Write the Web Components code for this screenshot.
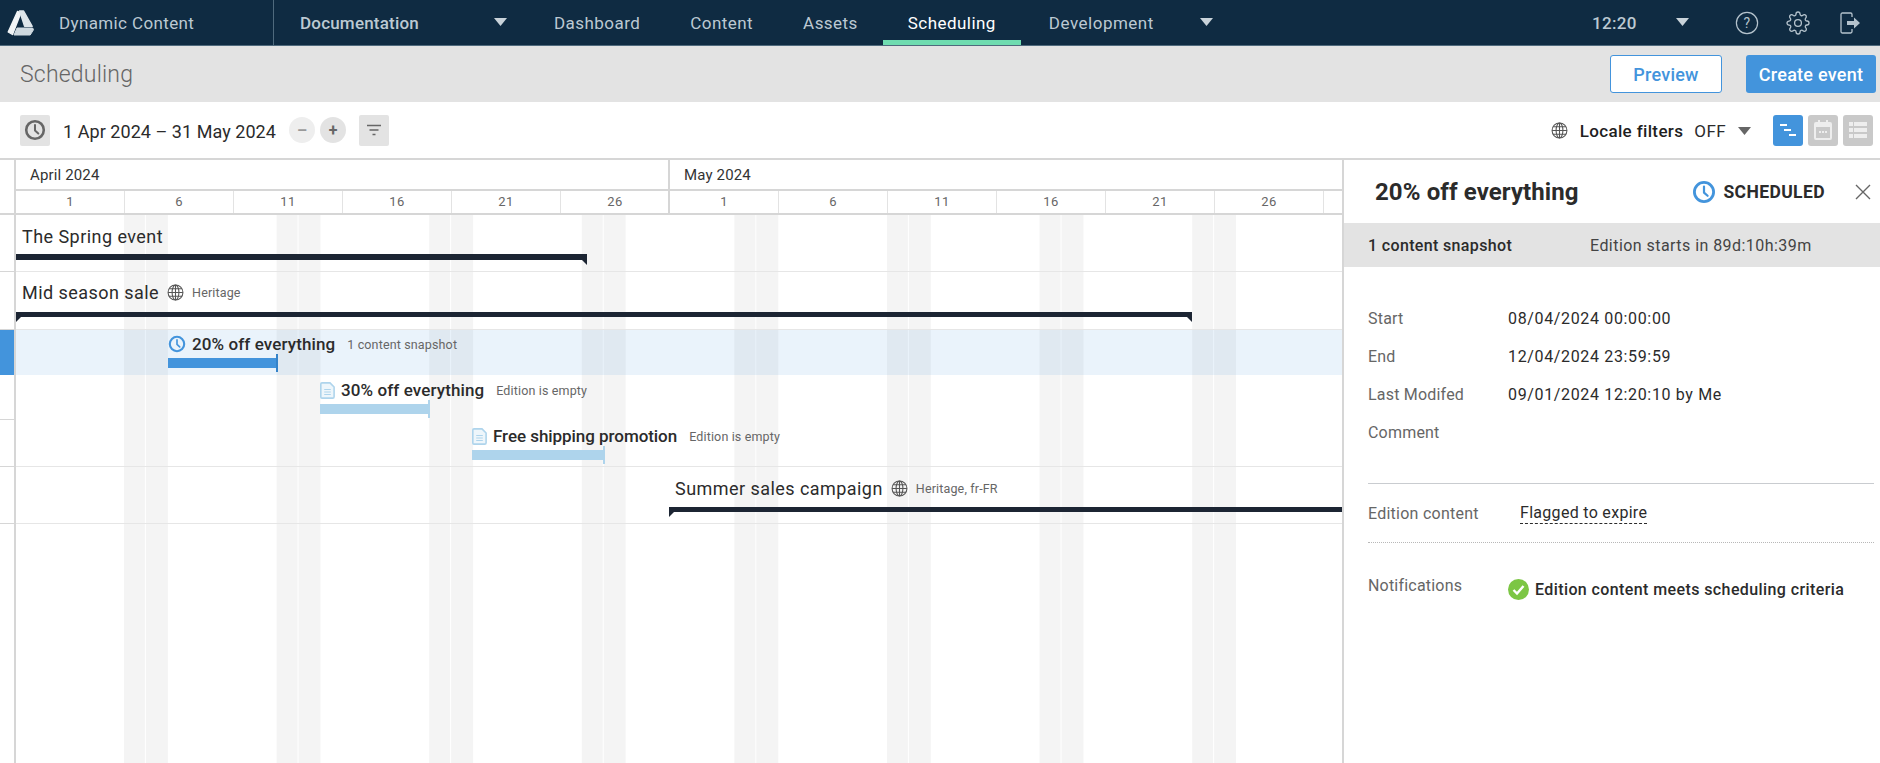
<!DOCTYPE html>
<html lang="en">
<head>
<meta charset="utf-8">
<title>Scheduling</title>
<style>
	html, body { margin: 0; height: 100%; overflow: hidden; }
	body { font-family: Roboto, "Liberation Sans", sans-serif; color: #2b2b2b; background: #fff; }
	app-shell svg { display: block; }
</style>
</head>
<body>

<app-shell>
	<top-nav></top-nav>
	<page-header></page-header>
	<date-toolbar></date-toolbar>
	<div slot="gantt">
		<gantt-chart>
			<gantt-row ruled style="--h:57px; --label-top:9px; --bar-top:8px; --start:0px; --len:571px; --bar-h:6px" kind="parent" notch="right" title-text="The Spring event"></gantt-row>
			<gantt-row ruled style="--h:58px; --label-top:8px; --bar-top:10px; --start:0px; --len:1176px; --bar-h:5px" kind="parent" notch="both" title-text="Mid season sale" globe meta="Heritage"></gantt-row>
			<gantt-row selected style="--h:45px; --label-top:4px; --bar-top:4px; --start:152px; --len:109px; --bar-h:10px" kind="edition" state="scheduled" title-text="20% off everything" meta="1 content snapshot"></gantt-row>
			<gantt-row rail-rule style="--h:45px; --label-top:5px; --bar-top:4px; --start:304px; --len:109px; --bar-h:10px" kind="edition" state="empty" title-text="30% off everything" meta="Edition is empty"></gantt-row>
			<gantt-row ruled style="--h:47px; --label-top:6px; --bar-top:4px; --start:456px; --len:132px; --bar-h:10px; --ls:-.05px" kind="edition" state="empty" title-text="Free shipping promotion" meta="Edition is empty"></gantt-row>
			<gantt-row ruled style="--h:57px; --label-top:9px; --bar-top:9px; --start:653px; --len:673px; --bar-h:5px" kind="parent" notch="left" title-text="Summer sales campaign" globe meta="Heritage, fr-FR"></gantt-row>
		</gantt-chart>
	</div>
	<div slot="panel">
		<detail-panel></detail-panel>
	</div>
</app-shell>

<script>
const ICONS = {
	clock: '<svg viewBox="0 0 24 24" width="100%" height="100%" fill="none" stroke="currentColor"><circle cx="12" cy="12" r="9.6" stroke-width="2.8"/><path d="M12 6.5V12.6l3.6 3.2" stroke-width="2.2" stroke-linecap="round" stroke-linejoin="round"/></svg>',
	globe: '<svg viewBox="0 0 16 16" width="100%" height="100%" fill="none" stroke="currentColor" stroke-width="1"><circle cx="8" cy="8" r="7"/><ellipse cx="8" cy="8" rx="3.2" ry="7"/><path d="M8 1v14M1 8h14M2 4.4h12M2 11.6h12"/></svg>',
	caret: '<svg viewBox="0 0 13 8" width="13" height="8" fill="currentColor"><path d="M0 0h13L6.5 8z"/></svg>',
	doc: '<svg viewBox="0 0 15 17" width="15" height="17" fill="#eef6fb" stroke="#aed4ec" stroke-width="1.6"><path d="M2 .9h8l4.1 4.1v9.7a1.4 1.4 0 0 1-1.4 1.4H2a1.2 1.2 0 0 1-1.2-1.2V2.1A1.2 1.2 0 0 1 2 .9z"/><path d="M4.2 7.5h6.6M4.2 10h6.6M4.2 12.5h6.6" stroke-width="1.1"/></svg>'
};

class AppShell extends HTMLElement {
	constructor() {
		super();
		const shadow = this.attachShadow({mode: 'open'});
		shadow.innerHTML = `<style>
			:host { display: flex; flex-direction: column; height: 763px; overflow: hidden; }
			#main { flex: 1; display: flex; min-height: 0; border-top: 2px solid #d6d6d6; }
			#left { width: 1342px; flex: none; }
			#right { flex: 1; min-width: 0; }
			::slotted([slot]) { height: 100%; }
		</style>
		<slot></slot>
		<div id="main">
			<div id="left"><slot name="gantt"></slot></div>
			<div id="right"><slot name="panel"></slot></div>
		</div>`;
	}
}

class TopNav extends HTMLElement {
	constructor() {
		super();
		const shadow = this.attachShadow({mode: 'open'});
		shadow.innerHTML = `<style>
			:host { display: flex; height: 45px; background: #0f2b42; border-bottom: 1px solid #4f6a7d; color: #bcc9d2; font-size: 17px; letter-spacing: .45px; box-sizing: content-box; }
			a { display: flex; align-items: center; white-space: nowrap; }
			#brand { width: 274px; flex: none; display: flex; align-items: center; border-right: 1px solid #4f6a7d; box-sizing: border-box; letter-spacing: .37px; }
			#brand svg { margin-left: 7px; flex: none; }
			#brand span { margin-left: 25px; }
			#hub { width: 246px; padding-left: 26px; box-sizing: border-box; display: flex; align-items: center; font-weight: 500; flex: none; letter-spacing: .2px; }
			#hub svg, #dev svg, #time svg { color: #c9d3da; margin-top: -1px; }
			#hub span { width: 194px; }
			#tabs { display: flex; height: 45px; margin-left: 9px; }
			.tab { padding: 0 25px; position: relative; }
			.tab.on { color: #fff; }
			.tab.on::after { content: ""; position: absolute; left: 0; right: 0; bottom: 0; height: 5px; background: #6fdcb0; }
			#dev { padding-left: 28px; letter-spacing: .5px; }
			#dev svg { margin-left: 46px; }
			#right { margin-left: auto; display: flex; align-items: center; color: #bcc9d2; }
			#time { width: 110px; display: flex; align-items: center; font-weight: 500; letter-spacing: .3px; }
			#time span { width: 84px; }
			.ico { width: 24px; height: 24px; margin-left: 27px; color: #b5c3cd; }
		</style>
		<div id="brand">
			<svg width="27" height="26" viewBox="0 0 27 26" fill="#e8edf1" stroke-linejoin="round">
				<path d="M10.5 1.5 13.8 3 5.5 24.5 1.2 22z" fill="#f2f5f7" stroke="#f2f5f7" stroke-width="1.4"/>
				<path d="M12.6 1h4l8.6 15.4h-7.6z" fill="#dfe6eb" stroke="#dfe6eb" stroke-width="1.4"/>
				<path d="M10 18h15.6l1 1.6-3.4 5.4H7z" fill="#cfd9e0" stroke="#cfd9e0" stroke-width="1"/>
			</svg>
			<span>Dynamic Content</span>
		</div>
		<div id="hub"><span>Documentation</span>${ICONS.caret}</div>
		<div id="tabs">
			<a class="tab">Dashboard</a>
			<a class="tab">Content</a>
			<a class="tab">Assets</a>
			<a class="tab on">Scheduling</a>
			<a class="tab" id="dev">Development${ICONS.caret}</a>
		</div>
		<div id="right">
			<div id="time"><span>12:20</span>${ICONS.caret}</div>
			<div class="ico" style="margin-left:33px"><svg viewBox="0 0 24 24" width="24" height="24" fill="none" stroke="currentColor" stroke-width="1.2"><circle cx="12" cy="12" r="10.6"/><text x="12" y="17" text-anchor="middle" font-size="14" font-family="Roboto, sans-serif" fill="currentColor" stroke="none">?</text></svg></div>
			<div class="ico"><svg viewBox="0 0 24 24" width="24" height="24" fill="none" stroke="currentColor" stroke-width="1.3"><circle cx="12" cy="12" r="3.4"/><path d="M19.4 15a1.65 1.65 0 0 0 .33 1.82l.06.06a2 2 0 0 1 0 2.83 2 2 0 0 1-2.83 0l-.06-.06a1.65 1.65 0 0 0-1.82-.33 1.65 1.65 0 0 0-1 1.51V21a2 2 0 0 1-2 2 2 2 0 0 1-2-2v-.09A1.65 1.65 0 0 0 9 19.4a1.65 1.65 0 0 0-1.82.33l-.06.06a2 2 0 0 1-2.83 0 2 2 0 0 1 0-2.83l.06-.06a1.65 1.65 0 0 0 .33-1.82 1.65 1.65 0 0 0-1.51-1H3a2 2 0 0 1-2-2 2 2 0 0 1 2-2h.09A1.65 1.65 0 0 0 4.6 9a1.65 1.65 0 0 0-.33-1.82l-.06-.06a2 2 0 0 1 0-2.83 2 2 0 0 1 2.83 0l.06.06a1.65 1.65 0 0 0 1.82.33H9a1.65 1.65 0 0 0 1-1.51V3a2 2 0 0 1 2-2 2 2 0 0 1 2 2v.09a1.65 1.65 0 0 0 1 1.51 1.65 1.65 0 0 0 1.82-.33l.06-.06a2 2 0 0 1 2.83 0 2 2 0 0 1 0 2.83l-.06.06a1.65 1.65 0 0 0-.33 1.82V9a1.65 1.65 0 0 0 1.51 1H21a2 2 0 0 1 2 2 2 2 0 0 1-2 2h-.09a1.65 1.65 0 0 0-1.51 1z"/></svg></div>
			<div class="ico" style="margin:0 18px 0 28px"><svg viewBox="0 0 24 24" width="24" height="24" fill="none" stroke="currentColor" stroke-width="1.3"><path d="M14 6V3.4A1.4 1.4 0 0 0 12.6 2H4.4A1.4 1.4 0 0 0 3 3.4v17.2A1.4 1.4 0 0 0 4.4 22h8.2a1.4 1.4 0 0 0 1.4-1.4V18"/><path d="M9 10h7V6.5l6 5.5-6 5.5V14H9z" fill="currentColor" stroke="none"/></svg></div>
		</div>`;
	}
}

class PageHeader extends HTMLElement {
	constructor() {
		super();
		const shadow = this.attachShadow({mode: 'open'});
		shadow.innerHTML = `<style>
			:host { display: flex; align-items: center; height: 56px; background: #e3e3e3; padding: 0 4px 0 20px; }
			h1 { margin: 1px 0 0; font-size: 23px; font-weight: 300; color: #666; letter-spacing: .2px; }
			#actions { margin-left: auto; display: flex; gap: 24px; }
			button { height: 38px; border-radius: 3px; font: 500 18px Roboto, sans-serif; letter-spacing: .25px; box-sizing: border-box; padding: 0; }
			#preview { width: 112px; background: #fff; border: 1px solid #4394dc; color: #4394dc; }
			#create { width: 130px; background: #4394dc; border: none; color: #fff; }
		</style>
		<h1>Scheduling</h1>
		<div id="actions">
			<button id="preview">Preview</button>
			<button id="create">Create event</button>
		</div>`;
	}
}

class DateToolbar extends HTMLElement {
	constructor() {
		super();
		const shadow = this.attachShadow({mode: 'open'});
		shadow.innerHTML = `<style>
			:host { display: flex; align-items: center; height: 56px; padding: 0 7px 0 20px; box-sizing: border-box; color: #2b2b2b; }
			.sq { width: 30px; height: 31px; border-radius: 2px; background: #e3e3e3; display: flex; align-items: center; justify-content: center; color: #666; flex: none; }
			#range { margin: 2px 0 0 13px; font-size: 18px; width: 212px; white-space: nowrap; letter-spacing: .05px; }
			.zoom { width: 26px; height: 26px; border-radius: 50%; display: flex; align-items: center; justify-content: center; background: #e3e3e3; color: #666; font-size: 16px; font-weight: 700; flex: none; }
			#minus { margin-left: 14px; background: #eee; color: #999; }
			#plus { margin-left: 5px; }
			#filter { margin-left: 13px; }
			#right { margin-left: auto; display: flex; align-items: center; }
			#globe { width: 17px; height: 17px; color: #555; }
			#lf { margin: 2px 0 0 12px; font-weight: 500; font-size: 17px; letter-spacing: .35px; color: #1f1f1f; }
			#off { margin: 2px 0 0 11px; font-size: 17px; letter-spacing: .4px; }
			#car { margin-left: 12px; color: #666; margin-top: -1px; }
			#views { display: flex; gap: 5px; margin-left: 22px; }
			#views .sq { border-radius: 3px; background: #c9c9c9; color: #eee; }
			#views .sq.on { background: #4394dc; color: #fff; }
		</style>
		<div class="sq"><div style="width:22px;height:22px">${ICONS.clock}</div></div>
		<div id="range">1 Apr 2024 – 31 May 2024</div>
		<div class="zoom" id="minus">–</div>
		<div class="zoom" id="plus">+</div>
		<div class="sq" id="filter"><svg width="16" height="12" viewBox="0 0 16 12" stroke="currentColor" stroke-width="1.4"><path d="M1 1.5h14M3.5 6h9M6.5 10.5h3"/></svg></div>
		<div id="right">
			<div id="globe">${ICONS.globe}</div>
			<div id="lf">Locale filters</div>
			<div id="off">OFF</div>
			<div id="car">${ICONS.caret}</div>
			<div id="views">
				<div class="sq on"><svg width="18" height="14" viewBox="0 0 18 14" fill="currentColor"><path d="M1 1h7v2H1zM5 6h7v2H5zM10 11h7v2h-7z"/></svg></div>
				<div class="sq"><svg width="18" height="20" viewBox="0 0 18 20" fill="currentColor"><path d="M4 0h2v3H4zM12 0h2v3h-2z"/><path fill-rule="evenodd" d="M2 2h14a2 2 0 0 1 2 2v14a2 2 0 0 1-2 2H2a2 2 0 0 1-2-2V4a2 2 0 0 1 2-2zm0 5v11h14V7z"/><path d="M5 11h2v2H5zM8 11h2v2H8zM11 11h2v2h-2z"/></svg></div>
				<div class="sq"><svg width="18" height="16" viewBox="0 0 18 16" fill="currentColor"><path d="M0 0h4v4H0zM5 0h13v4H5zM0 6h4v4H0zM5 6h13v4H5zM0 12h4v4H0zM5 12h13v4H5z"/></svg></div>
			</div>
		</div>`;
	}
}

class GanttChart extends HTMLElement {
	constructor() {
		super();
		const shadow = this.attachShadow({mode: 'open'});
		const days = [1, 6, 11, 16, 21, 26];
		const cells = function() {
			return days.map(function(d) { return `<div class="day">${d}</div>`; }).join('');
		};
		shadow.innerHTML = `<style>
			:host { display: flex; flex-direction: column; height: 100%; overflow: hidden; }
			#head { display: grid; grid-template-columns: 14px 656px 1fr; flex: none; }
			.railhead { grid-row: span 2; border-right: 2px solid #d6d6d6; width: 14px; box-sizing: content-box; border-bottom: 2px solid #d6d6d6; }
			.month { height: 29px; padding: 0 0 0 14px; display: flex; align-items: center; font-size: 15px; color: #333; letter-spacing: .15px; border-bottom: 2px solid #d6d6d6; border-right: 2px solid #d6d6d6; box-sizing: content-box; margin-left: 2px; }
			.month + .month { border-right: none; margin-left: 0; padding-left: 14px; }
			.days { display: flex; grid-column: 2; border-bottom: 2px solid #d6d6d6; margin-left: 2px; border-right: 2px solid #d6d6d6; height: 22px; overflow: hidden; }
			.days + .days { grid-column: 3; margin-left: 0; border-right: none; }
			.day { width: 109px; flex: none; box-sizing: border-box; border-right: 1px solid #e3e3e3; text-align: center; font-size: 13px; line-height: 22px; color: #666; letter-spacing: .4px; }
			#body { flex: 1; min-height: 0; display: flex; flex-direction: column; background-color: #fff; background-image: linear-gradient(90deg, #f4f4f4 0 21px, #fff 21px 22px, #f4f4f4 22px 44px, #fff 44px); background-size: 152.6px 100%; background-position: 124px 0; background-repeat: repeat-x; }
			#fill { flex: 1; display: grid; grid-template-columns: 14px 2px 1fr; }
			#fill i { background: #d6d6d6; grid-column: 2; }
			#fill b { background: #fff; grid-column: 1; grid-row: 1; }
		</style>
		<div id="head">
			<div class="railhead"></div>
			<div class="month">April 2024</div>
			<div class="month">May 2024</div>
			<div class="days">${cells()}</div>
			<div class="days">${cells()}</div>
		</div>
		<div id="body">
			<slot></slot>
			<div id="fill"><b></b><i></i></div>
		</div>`;
	}
}

class GanttRow extends HTMLElement {
	connectedCallback() {
		if(this.shadowRoot)
			return;

		const shadow = this.attachShadow({mode: 'open'});
		const kind = this.getAttribute('kind');
		const state = this.getAttribute('state');
		const notch = this.getAttribute('notch');
		const meta = this.getAttribute('meta');
		let icon = '';

		if(state === 'scheduled')
			icon = `<span class="state clock">${ICONS.clock}</span>`;
		else if(state === 'empty')
			icon = `<span class="state">${ICONS.doc}</span>`;

		shadow.innerHTML = `<style>
			:host { display: grid; grid-template-columns: 14px 2px 1fr; height: var(--h); box-sizing: content-box; }
			#rail { background: #fff; }
			:host([ruled]) #rail, :host([rail-rule]) #rail { border-bottom: 1px solid #d6d6d6; }
			:host([selected]) #rail { background: #4394dc; }
			#line { background: #d6d6d6; }
			#track { display: flow-root; padding-left: var(--start); box-sizing: border-box; min-width: 0; }
			:host([ruled]) #track { border-bottom: 1px solid #e6e6e6; }
			:host([selected]) #track { background: rgba(67, 148, 220, .11); }
			#label { display: flex; align-items: center; white-space: nowrap; margin-top: var(--label-top); height: 20px; }
			.parent #label { padding-left: 6px; font-size: 18px; color: #2b2b2b; letter-spacing: .45px; margin-top: calc(var(--label-top) + 2px); }
			.edition #label { font-size: 17px; font-weight: 500; letter-spacing: var(--ls, .1px); color: #2b2b2b; }
			.state { display: block; width: 18px; height: 18px; margin-right: 6px; flex: none; color: #4394dc; }
			.state svg { display: block; }
			.state:not(.clock) { width: 15px; height: 17px; }
			#globe { width: 17px; height: 17px; margin: 0 8px; color: #555; flex: none; }
			#meta { font-size: 12.5px; font-weight: 400; color: #666; letter-spacing: .15px; margin-left: 12px; }
			.parent #globe + #meta { margin-left: 0; }
			#bar { position: relative; width: var(--len); height: var(--bar-h); margin-top: var(--bar-top); }
			.parent #bar { background: #1c2533; }
			.scheduled #bar { background: #4394dc; }
			.empty #bar { background: #aed4ec; }
			.edition #bar::after { content: ""; position: absolute; right: -1px; top: -4px; bottom: -4px; width: 2px; background: inherit; }
			.scheduled #bar::after { background: #3583c9; }
			.tip { position: absolute; top: 100%; width: 0; height: 0; border-style: solid; }
			.tip.l { left: 0; border-width: 5px 5px 0 0; border-color: #1c2533 transparent transparent transparent; }
			.tip.r { right: 0; border-width: 5px 0 0 5px; border-color: #1c2533 transparent transparent transparent; }
		</style>
		<div id="rail"></div>
		<div id="line"></div>
		<div id="track" class="${kind} ${state || ''}">
			<div id="label">${icon}<span>${this.getAttribute('title-text')}</span>${this.hasAttribute('globe') ? `<span id="globe">${ICONS.globe}</span>` : ''}${meta ? `<span id="meta">${meta}</span>` : ''}</div>
			<div id="bar">${notch === 'left' || notch === 'both' ? '<i class="tip l"></i>' : ''}${notch === 'right' || notch === 'both' ? '<i class="tip r"></i>' : ''}</div>
		</div>`;
	}
}

class DetailPanel extends HTMLElement {
	constructor() {
		super();
		const shadow = this.attachShadow({mode: 'open'});
		shadow.innerHTML = `<style>
			:host { display: block; height: 100%; border-left: 2px solid #d6d6d6; box-sizing: border-box; font-size: 16px; color: #2b2b2b; letter-spacing: .2px; }
			#head { display: flex; align-items: center; height: 63px; padding-left: 31px; }
			h2 { margin: 0; font-size: 24px; font-weight: 700; color: #2b2b2b; letter-spacing: .1px; flex: 1; white-space: nowrap; }
			#status { display: flex; align-items: center; font-weight: 700; font-size: 17.5px; letter-spacing: .4px; }
			#status i { display: block; width: 24px; height: 24px; margin-right: 7px; color: #4394dc; }
			#close { margin: 0 9px 0 30px; width: 16px; height: 16px; color: #666; }
			#strip { height: 44px; background: #e3e3e3; display: flex; align-items: center; padding-left: 24px; }
			#strip b { width: 222px; font-weight: 500; letter-spacing: .35px; }
			#strip span { color: #444; letter-spacing: .45px; }
			#info { padding: 32px 0 0 24px; display: grid; grid-template-columns: 140px 1fr; grid-auto-rows: 38px; align-items: center; }
			.k { color: #666; }
			.v { letter-spacing: .65px; }
			.rule { margin: 32px 6px 0 24px; border-top: 1px solid #c9ccd0; }
			#content { margin: 0 6px 0 24px; height: 58px; display: flex; align-items: center; border-bottom: 1px dotted #b8b8b8; }
			#content .k { width: 152px; letter-spacing: .25px; }
			#content u { text-decoration: none; border-bottom: 1px dashed #2b2b2b; padding-bottom: 1px; letter-spacing: .3px; }
			#notes { margin: 33px 0 0 24px; display: flex; }
			#notes .k { width: 140px; }
			#notes div + div { display: flex; align-items: center; font-weight: 500; margin-top: 3px; letter-spacing: .4px; }
			#notes svg { margin-right: 6px; }
		</style>
		<div id="head">
			<h2>20% off everything</h2>
			<div id="status"><i>${ICONS.clock}</i>SCHEDULED</div>
			<div id="close"><svg viewBox="0 0 16 16" width="16" height="16" stroke="currentColor" stroke-width="1.4"><path d="M1 1l14 14M15 1L1 15"/></svg></div>
		</div>
		<div id="strip"><b>1 content snapshot</b><span>Edition starts in 89d:10h:39m</span></div>
		<div id="info">
			<div class="k">Start</div><div class="v">08/04/2024 00:00:00</div>
			<div class="k">End</div><div class="v">12/04/2024 23:59:59</div>
			<div class="k">Last Modifed</div><div class="v">09/01/2024 12:20:10 by Me</div>
			<div class="k">Comment</div><div></div>
		</div>
		<div class="rule"></div>
		<div id="content"><div class="k">Edition content</div><u>Flagged to expire</u></div>
		<div id="notes">
			<div class="k">Notifications</div>
			<div><svg width="21" height="21" viewBox="0 0 21 21"><circle cx="10.5" cy="10.5" r="10.5" fill="#7cc644"/><path d="M5.5 11l3.5 3.5 6.5-7.5" fill="none" stroke="#fff" stroke-width="2.4"/></svg>Edition content meets scheduling criteria</div>
		</div>`;
	}
}

customElements.define('app-shell', AppShell);
customElements.define('top-nav', TopNav);
customElements.define('page-header', PageHeader);
customElements.define('date-toolbar', DateToolbar);
customElements.define('gantt-chart', GanttChart);
customElements.define('gantt-row', GanttRow);
customElements.define('detail-panel', DetailPanel);
</script>
</body>
</html>
